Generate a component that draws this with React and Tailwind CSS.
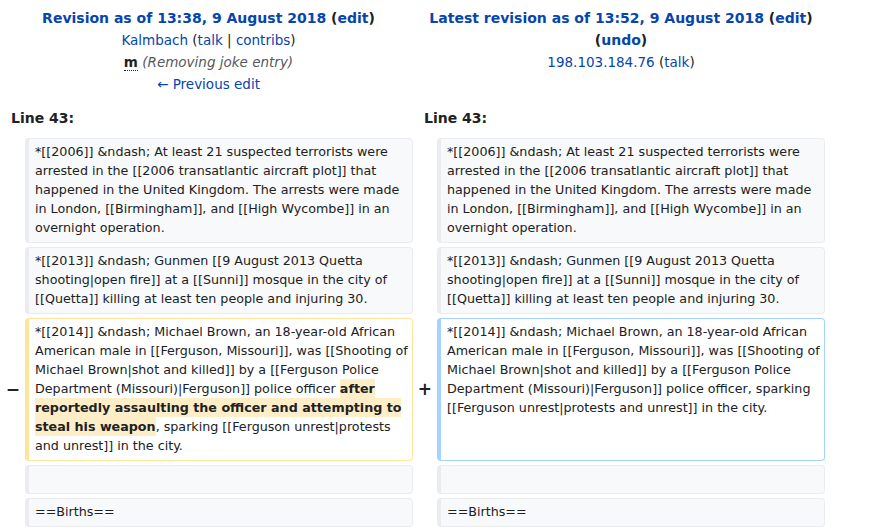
const font = { fontFamily: '"DejaVu Sans", Verdana, sans-serif' };

function Context({ children }) {
    return (
        <div className="rounded-[4px] border border-[#eaecf0] border-l-4 bg-[#f8f9fa] pl-[6px] pr-[3px] pt-[3px] pb-[5px] leading-[19px] min-h-[29px]">
            {children}
        </div>
    );
}

function Marker({ children }) {
    return (
        <div className="flex items-center justify-end pr-[1px] text-[17px] font-bold text-[#202122]">
            {children}
        </div>
    );
}

const A = ({ children, bold }) => (
    <a href="#" className={`text-[#0645ad] ${bold ? 'font-bold' : ''}`}>{children}</a>
);

export default function App() {
    return (
        <div className="bg-white text-[#202122] w-[874px] h-[531px] overflow-hidden" style={font}>
            <div className="grid grid-cols-[17px_388px_16px_388px] gap-1 px-1 pt-[7px] text-[12.7px]">
                {/* header */}
                <div className="col-span-2 text-center text-[13.5px] leading-[22px]">
                    <div className="font-bold text-[14px]">
                        <A>Revision as of 13:38, 9 August 2018</A> (<A>edit</A>)
                    </div>
                    <div>
                        <A>Kalmbach</A> (<A>talk</A> | <A>contribs</A>)
                    </div>
                    <div>
                        <abbr className="font-bold no-underline border-b border-dotted border-[#202122]">m</abbr>{' '}
                        <span className="italic text-[#54595d]">(Removing joke entry)</span>
                    </div>
                    <div>
                        <A>← Previous edit</A>
                    </div>
                </div>
                <div className="col-span-2 text-center text-[13.5px] leading-[22px]">
                    <div className="font-bold text-[14px]">
                        <A>Latest revision as of 13:52, 9 August 2018</A> (<A>edit</A>)
                    </div>
                    <div className="font-bold text-[14px]">
                        (<A>undo</A>)
                    </div>
                    <div>
                        <A>198.103.184.76</A> (<A>talk</A>)
                    </div>
                </div>

                {/* line numbers */}
                <div className="col-span-2 pl-[7px] pt-[10px] pb-[6px] font-bold text-[14px] leading-[19px]">Line 43:</div>
                <div className="col-span-2 pl-[7px] pt-[10px] pb-[6px] font-bold text-[14px] leading-[19px]">Line 43:</div>

                {/* context 1 */}
                <div />
                <Context>
                    *[[2006]] &amp;ndash; At least 21 suspected terrorists were arrested in the [[2006 transatlantic aircraft plot]] that happened in the United Kingdom. The arrests were made in London, [[Birmingham]], and [[High Wycombe]] in an overnight operation.
                </Context>
                <div />
                <Context>
                    *[[2006]] &amp;ndash; At least 21 suspected terrorists were arrested in the [[2006 transatlantic aircraft plot]] that happened in the United Kingdom. The arrests were made in London, [[Birmingham]], and [[High Wycombe]] in an overnight operation.
                </Context>

                {/* context 2 */}
                <div />
                <Context>
                    *[[2013]] &amp;ndash; Gunmen [[9 August 2013 Quetta shooting|open fire]] at a [[Sunni]] mosque in the city of [[Quetta]] killing at least ten people and injuring 30.
                </Context>
                <div />
                <Context>
                    *[[2013]] &amp;ndash; Gunmen [[9 August 2013 Quetta shooting|open fire]] at a [[Sunni]] mosque in the city of [[Quetta]] killing at least ten people and injuring 30.
                </Context>

                {/* changed */}
                <Marker>−</Marker>
                <div className="rounded-[4px] border border-[#ffe49c] border-l-4 bg-white pl-[6px] pr-[3px] pt-[3px] pb-[5px] leading-[19px]">
                    *[[2014]] &amp;ndash; Michael Brown, an 18-year-old African American male in [[Ferguson, Missouri]], was [[Shooting of Michael Brown|shot and killed]] by a [[Ferguson Police Department (Missouri)|Ferguson]] police officer{' '}
                    <span className="bg-[#feeec8] font-bold py-[2px] box-decoration-clone">after reportedly assaulting the officer and attempting to steal his weapon</span>
                    , sparking [[Ferguson unrest|protests and unrest]] in the city.
                </div>
                <Marker>+</Marker>
                <div className="rounded-[4px] border border-[#a3d3ff] border-l-4 bg-white pl-[6px] pr-[3px] pt-[3px] pb-[5px] leading-[19px]">
                    *[[2014]] &amp;ndash; Michael Brown, an 18-year-old African American male in [[Ferguson, Missouri]], was [[Shooting of Michael Brown|shot and killed]] by a [[Ferguson Police Department (Missouri)|Ferguson]] police officer, sparking [[Ferguson unrest|protests and unrest]] in the city.
                </div>

                {/* empty */}
                <div />
                <Context>{'\u00a0'}</Context>
                <div />
                <Context>{'\u00a0'}</Context>

                {/* births */}
                <div />
                <Context>==Births==</Context>
                <div />
                <Context>==Births==</Context>
            </div>
        </div>
    );
}
